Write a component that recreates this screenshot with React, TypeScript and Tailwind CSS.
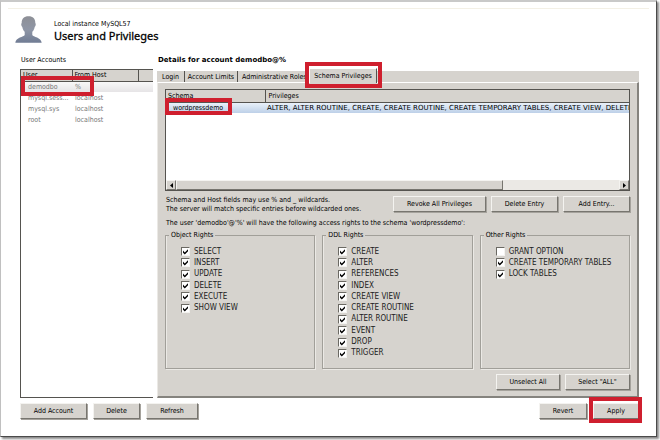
import type { ReactNode } from "react";

const bevel =
  "border border-t-[#f4f3f0] border-l-[#f4f3f0] border-r-[#77756f] border-b-[#77756f] bg-[#d6d3ce]";

function PushButton({ children, width }: { children: ReactNode; width: string }) {
  return (
    <button
      type="button"
      className={`h-4 shrink-0 whitespace-nowrap text-center shadow-[1px_1px_0_#a5a29c] ${bevel} ${width}`}
    >
      {children}
    </button>
  );
}

function Highlight({ place }: { place: string }) {
  return (
    <span
      aria-hidden="true"
      className={`pointer-events-none absolute z-10 border-4 border-[#cf1f2e] ${place}`}
    />
  );
}

function Right({ name, checked }: { name: string; checked: boolean }) {
  return (
    <label className="flex items-center gap-1">
      <span className="relative block size-[9px]">
        <input
          type="checkbox"
          defaultChecked={checked}
          className="peer block size-[9px] appearance-none border border-t-[#6b6963] border-l-[#6b6963] border-r-[#f4f3f0] border-b-[#f4f3f0] bg-white"
        />
        <svg
          viewBox="0 0 9 9"
          className="pointer-events-none absolute inset-0 hidden size-[9px] peer-checked:block"
        >
          <path d="M2 3.6 L3.8 5.4 L7 2.2 V4.3 L3.8 7.4 L2 5.7 Z" fill="#000" />
        </svg>
      </span>
      <span className="text-[8px] whitespace-nowrap text-[#1c1c1c]">{name}</span>
    </label>
  );
}

function RightsGroup({
  title,
  rights,
  unchecked = [],
}: {
  title: string;
  rights: string[];
  unchecked?: string[];
}) {
  return (
    <fieldset className="min-w-0 border border-[#a19f99] px-[15px] pt-[6px] pb-[9px] shadow-[inset_1px_0_0_#ebe9e5,1px_1px_0_#ebe9e5]">
      <legend className="-ml-3 px-[2px] leading-[10px]">{title}</legend>
      <div className="grid h-[113px] grid-rows-10">
        {rights.map((name) => (
          <Right key={name} name={name} checked={!unchecked.includes(name)} />
        ))}
      </div>
    </fieldset>
  );
}

const users = [
  ["demodbo", "%"],
  ["mysql.sess...", "localhost"],
  ["mysql.sys", "localhost"],
  ["root", "localhost"],
];

const objectRights = ["SELECT", "INSERT", "UPDATE", "DELETE", "EXECUTE", "SHOW VIEW"];
const ddlRights = [
  "CREATE",
  "ALTER",
  "REFERENCES",
  "INDEX",
  "CREATE VIEW",
  "CREATE ROUTINE",
  "ALTER ROUTINE",
  "EVENT",
  "DROP",
  "TRIGGER",
];
const otherRights = ["GRANT OPTION", "CREATE TEMPORARY TABLES", "LOCK TABLES"];

export default function App() {
  return (
    <div className="bg-white pr-[3px] pb-[3px] font-['DejaVu_Sans_Condensed','DejaVu_Sans',sans-serif] text-[7px] leading-[10px] text-black">
      <div className="border-t-2 border-r border-b border-l border-t-[#c9c9c9] border-r-[#4a4a4a] border-b-[#4a4a4a] border-l-[#c0c0c0] bg-white pt-[6px] pr-[17px] pb-[17px] pl-[19px] shadow-[2px_2px_2px_#8a8a8a]">
        <header className="-mr-[10px] -ml-3 flex h-[47px] items-start gap-3 border-t border-[#f3f0e6] pt-[7px] pl-[7px]">
          <svg viewBox="0 0 27 27" className="size-[27px]" aria-hidden="true">
            <defs>
              <linearGradient id="person" x1="0" y1="0" x2="0" y2="1">
                <stop offset="0" stopColor="#8d8f96" />
                <stop offset="0.5" stopColor="#8f96a6" />
                <stop offset="1" stopColor="#707c94" />
              </linearGradient>
            </defs>
            <path
              d="M13.5 0.3 C9 0.3 6.6 3 6.7 7 C5.9 7.4 6.1 10 7.3 10.9 C7.7 13.2 8.5 14.6 9.7 15.8 V19 C8.8 21 0.8 21.3 0.3 26.7 H26.7 C26.2 21.3 18.2 21 17.3 19 V15.8 C18.5 14.6 19.3 13.2 19.7 10.9 C20.9 10 21.1 7.4 20.3 7 C20.4 3 18 0.3 13.5 0.3 Z"
              fill="url(#person)"
            />
          </svg>
          <div className="pt-[3px]">
            <p>Local instance MySQL57</p>
            <h1 className="font-['Noto_Sans','Open_Sans',sans-serif] text-[11px] leading-[14px] [-webkit-text-stroke:0.3px_black]">
              Users and Privileges
            </h1>
          </div>
        </header>

        <main className="flex gap-1">
          <section className="flex w-[133px] shrink-0 flex-col">
            <h2 className="mb-1 pl-px">User Accounts</h2>
            <div className="relative grow border-t border-b border-l border-[#55534f] bg-white">
              <table className="w-full table-fixed border-collapse text-left text-[#777777]">
                <thead className="bg-[#d6d3ce] text-black">
                  <tr className="h-[11px] border-b border-[#55534f]">
                    <th className="w-[51px] border-r border-[#55534f] p-0 pl-[2px] font-normal">User</th>
                    <th className="w-[66px] border-r border-[#55534f] p-0 pl-[2px] font-normal">From Host</th>
                    <th className="p-0" />
                  </tr>
                </thead>
                <tbody>
                  {users.map(([user, host], i) => (
                    <tr
                      key={user}
                      className={i === 0 ? "h-[11px] bg-linear-to-b from-[#fafafa] to-[#e6e4e6]" : "h-[11px]"}
                    >
                      <td className="p-0 pl-[7px] whitespace-nowrap">{user}</td>
                      <td className="p-0 pl-[3px]">{host}</td>
                      <td className="p-0" />
                    </tr>
                  ))}
                </tbody>
              </table>
              <Highlight place="top-[6px] left-0 h-5 w-[73px]" />
            </div>
          </section>

          <section className="min-w-0 grow">
            <h2 className="mb-[6px] pl-px font-['DejaVu_Sans',sans-serif] font-bold">Details for account demodbo@%</h2>
            <div className="relative z-10 flex h-[11px] items-stretch bg-[#d6d3ce]">
              <button type="button" className="w-7 border-r border-[#55534f] whitespace-nowrap">Login</button>
              <button type="button" className="w-[53px] border-r border-[#55534f] whitespace-nowrap">Account Limits</button>
              <button type="button" className="w-[71px] pl-1 text-left whitespace-nowrap">
                Administrative Roles
              </button>
              <div className="relative -mt-[3px] -mb-px">
                <button
                  type="button"
                  className="h-full w-[68px] border-t border-r border-l border-t-white border-r-[#55534f] border-l-white bg-[#d6d3ce] whitespace-nowrap"
                >
                  Schema Privileges
                </button>
                <Highlight place="-top-[6px] -left-1 h-[26px] w-[77px]" />
              </div>
            </div>

            <div className="border-t border-r-2 border-b-2 border-l border-t-white border-r-[#85837e] border-b-[#85837e] border-l-[#ebe9e5] bg-[#d6d3ce] px-[7px] pt-[6px] pb-[6px]">
              <div className="relative flex h-[102px] flex-col border border-[#55534f] bg-white">
                <div className="grow overflow-hidden">
                  <table className="w-full table-fixed border-collapse text-left">
                    <thead className="bg-[#d6d3ce]">
                      <tr className="h-3 border-b border-[#55534f]">
                        <th className="w-[99px] border-r border-[#55534f] p-0 pl-[2px] font-normal">Schema</th>
                        <th className="p-0 pl-[3px] font-normal">Privileges</th>
                      </tr>
                    </thead>
                    <tbody>
                      <tr className="h-[11px] bg-linear-to-b from-[#eef4fb] to-[#bdd0e8]">
                        <td className="p-0 pl-[7px]">wordpressdemo</td>
                        <td className="p-0 pl-[2px] font-['DejaVu_Sans',sans-serif] whitespace-nowrap">
                          ALTER, ALTER ROUTINE, CREATE, CREATE ROUTINE, CREATE TEMPORARY TABLES, CREATE VIEW, DELETE
                        </td>
                      </tr>
                    </tbody>
                  </table>
                </div>
                <div className="flex h-[10px] bg-[#ebe9e5]">
                  <button type="button" aria-label="Scroll left" className={`flex w-[10px] items-center justify-center ${bevel}`}>
                    <svg viewBox="0 0 3 5" className="h-[5px] w-[3px]"><path d="M3 0 V5 L0 2.5 Z" /></svg>
                  </button>
                  <div className={`w-[327px] ${bevel}`} />
                  <button type="button" aria-label="Scroll right" className={`ml-auto flex w-[10px] items-center justify-center ${bevel}`}>
                    <svg viewBox="0 0 3 5" className="h-[5px] w-[3px]"><path d="M0 0 V5 L3 2.5 Z" /></svg>
                  </button>
                </div>
                <Highlight place="top-2 -left-px h-[17px] w-[67px]" />
              </div>

              <div className="mt-[5px] flex gap-[5px]">
                <p className="h-[18px] grow pl-px leading-[9px] whitespace-nowrap">
                  Schema and Host fields may use % and _ wildcards.
                  <br />
                  The server will match specific entries before wildcarded ones.
                </p>
                <PushButton width="w-[93px]">Revoke All Privileges</PushButton>
                <PushButton width="w-[67px]">Delete Entry</PushButton>
                <PushButton width="w-[67px]">Add Entry...</PushButton>
              </div>

              <p className="mt-1 pl-px">
                The user 'demodbo'@'%' will have the following access rights to the schema 'wordpressdemo':
              </p>

              <div className="mt-[2px] grid grid-cols-3 gap-[7px]">
                <RightsGroup title="Object Rights" rights={objectRights} />
                <RightsGroup title="DDL Rights" rights={ddlRights} />
                <RightsGroup title="Other Rights" rights={otherRights} unchecked={["GRANT OPTION"]} />
              </div>

              <div className="mt-[5px] flex justify-end gap-[5px]">
                <PushButton width="w-[64px]">Unselect All</PushButton>
                <PushButton width="w-[65px]">Select "ALL"</PushButton>
              </div>
            </div>
          </section>
        </main>

        <footer className="mt-[5px] flex gap-[6px]">
          <PushButton width="w-[67px]">Add Account</PushButton>
          <PushButton width="w-[47px]">Delete</PushButton>
          <PushButton width="w-[52px]">Refresh</PushButton>
          <div className="ml-auto flex gap-[6px]">
            <PushButton width="w-[48px]">Revert</PushButton>
            <div className="relative flex">
              <PushButton width="w-[46px]">Apply</PushButton>
              <Highlight place="-top-[6px] -left-1 h-[26px] w-[53px]" />
            </div>
          </div>
        </footer>
      </div>
    </div>
  );
}
